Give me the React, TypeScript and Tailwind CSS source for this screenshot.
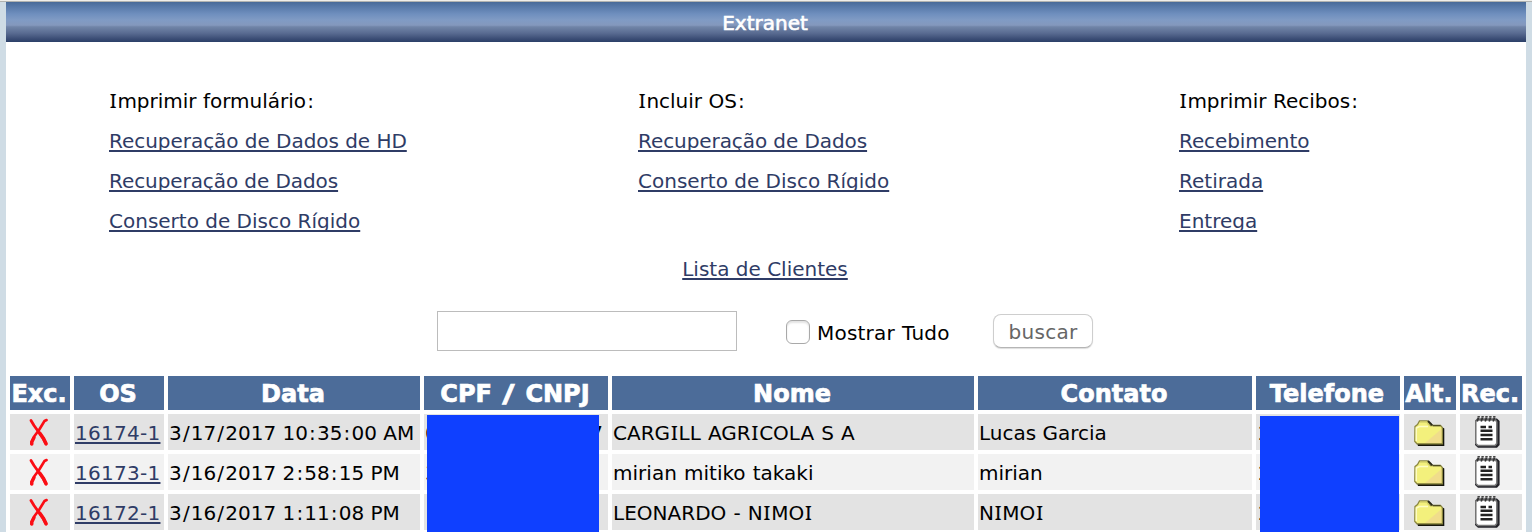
import React from "react";

const rows = [
  { os: "16174-1", date: "3/17/2017 10:35:00 AM", doc: ["0", "7"], name: "CARGILL AGRICOLA S A", contact: "Lucas Garcia", phone: "2" },
  { os: "16173-1", date: "3/16/2017 2:58:15 PM", doc: ["3", ""], name: "mirian mitiko takaki", contact: "mirian", phone: "2" },
  { os: "16172-1", date: "3/16/2017 1:11:08 PM", doc: ["", ""], name: "LEONARDO - NIMOI", contact: "NIMOI", phone: "2" },
];

const headers = ["Exc.", "OS", "Data", "CPF / CNPJ", "Nome", "Contato", "Telefone", "Alt.", "Rec."];

function Txt({ children }: { children: string }) {
  return (
    <>
      {children.split(/([I/:])/).map((part, i) => {
        if (part === "I")
          return (
            <span key={i} className="px-[0.8px] font-['Noto_Sans',sans-serif] leading-none [-webkit-text-stroke:0.2px_black]">
              I
            </span>
          );
        if (part === "/" || part === ":")
          return (
            <span key={i} className="px-[1.15px]">
              {part}
            </span>
          );
        return part;
      })}
    </>
  );
}

function Link({ children, className = "" }: { children: React.ReactNode; className?: string }) {
  return (
    <a
      href="#"
      className={`text-[#2f3c66] underline decoration-2 underline-offset-[2px] [text-decoration-skip-ink:none] ${className}`}
    >
      {children}
    </a>
  );
}

function DeleteIcon() {
  return (
    <svg width="20" height="30" viewBox="0 0 20 30" fill="none" stroke="#fb0d14" strokeLinecap="round" strokeLinejoin="round" className="mx-auto block">
      <path d="M2 3.5L5 8.5L10 15.5L14 21L17 26.5" strokeWidth="2.8" />
      <path d="M11 16.5L14.5 21.5L17 26.8" strokeWidth="3.6" />
      <path d="M17.6 3L15.5 4L10 13L5.5 19L2.5 25V27" strokeWidth="2.6" />
      <path d="M5 20.5L2.8 25V27" strokeWidth="3.4" />
    </svg>
  );
}

function FolderIcon() {
  return (
    <svg width="32" height="28" viewBox="0 0 32 28" className="mx-auto block">
      <path d="M4 25H29V9L31.3 10.5V28H5z" fill="#15150c" />
      <path d="M2 8.5L4.5 6.5L6.5 3H14.5L17.5 7.5H27.5L29.3 9.5V25.8H4L1.8 23.5z" fill="#f3f07c" stroke="#8b8740" strokeWidth="1.3" />
      <path d="M3.3 23V10L6.5 8.5H15" fill="none" stroke="#fdfcc4" strokeWidth="1.5" />
      <path d="M12 25L28.5 11V25z" fill="#efd096" opacity=".6" />
      <path d="M7 4H14L16 7" fill="none" stroke="#d3d06c" strokeWidth="1.5" />
      <path d="M15 3L18.5 6.5L19.5 7" fill="none" stroke="#292918" strokeWidth="1.8" />
      <path d="M20 7.6H27.5" fill="none" stroke="#4e4c24" strokeWidth="1.3" />
    </svg>
  );
}

function NotepadIcon() {
  return (
    <svg width="28" height="34" viewBox="0 0 28 34" className="mx-auto block">
      <path d="M4 3.5H24L26.6 6V30L24 32.7H5L2 30V6z" fill="#222228" />
      <path d="M3.6 5H22.6L23.8 7V28.5L22 30.6H5L2.8 28.5V6.5z" fill="#fff" stroke="#777" strokeWidth="1.5" />
      <path d="M4.2 6.5L5.5 2.5M8.2 6.5L9.5 2.5M12.2 6.5L13.5 2.5M16.2 6.5L17.5 2.5M20.2 6.5L21.5 2.5" stroke="#333" strokeWidth="1.7" />
      <path d="M4.5 1.8H24" stroke="#444" strokeWidth="1.5" strokeDasharray="2.4 1.5" />
      <path d="M7.5 12H13M15.5 12H19M7.5 15.8H19.5M7.5 20H19.5M7.5 24.3H19.5" stroke="#222" strokeWidth="2.4" />
    </svg>
  );
}

export default function App() {
  return (
    <div className="h-[532px] w-[1532px] overflow-hidden bg-[#cfdce5] font-['DejaVu_Sans',Verdana,sans-serif] text-[20px] leading-[40px] text-black">
      <div className="h-px bg-[#efeeea]" />
      <div className="h-px bg-[#b1b3b1]" />
      <div className="mx-[6px] h-[530px] bg-white">
        <header className="h-10 bg-[linear-gradient(#486a98_0%,#5577a7_10%,#6f8fbe_30%,#809bc4_45%,#8498bd_58%,#7185a8_62%,#596b91_78%,#3b4d75_92%,#2b4068_100%)] pr-[2px] pt-px text-center text-white [-webkit-text-stroke:0.6px_white]">
          Extranet
        </header>

        <nav className="grid h-[200px] grid-cols-[529px_541px_1fr] pl-[103px] pt-[39px]">
          <div className="flex flex-col items-start">
            <span><Txt>Imprimir formulário:</Txt></span>
            <Link className="tracking-[-0.04px]">Recuperação de Dados de HD</Link>
            <Link className="tracking-[-0.08px]">Recuperação de Dados</Link>
            <Link>Conserto de Disco Rígido</Link>
          </div>
          <div className="flex flex-col items-start">
            <span><Txt>Incluir OS:</Txt></span>
            <Link className="tracking-[-0.08px]">Recuperação de Dados</Link>
            <Link>Conserto de Disco Rígido</Link>
          </div>
          <div className="flex flex-col items-start">
            <span><Txt>Imprimir Recibos:</Txt></span>
            <Link className="tracking-[-0.1px]">Recebimento</Link>
            <Link>Retirada</Link>
            <Link>Entrega</Link>
          </div>
        </nav>

        <div className="mt-[7px] pr-[2px] text-center">
          <Link>Lista de Clientes</Link>
        </div>

        <form className="mt-[22px] flex h-10 items-center pl-[431px]" onSubmit={(e) => e.preventDefault()}>
          <input type="text" aria-label="Busca" className="h-10 w-[300px] border border-[#bcbcbc] bg-white px-2" />
          <label className="ml-[49px] flex items-center">
            <input
              type="checkbox"
              className="mt-[2px] h-6 w-6 appearance-none rounded-[6px] border border-[#a9a9a9] bg-white shadow-[inset_0_2px_2px_#e3e3e3]"
            />
            <span className="ml-[7px] w-[176px] pt-[3px] tracking-[0.2px] [word-spacing:0.7px]">Mostrar Tudo</span>
          </label>
          <button className="h-[34px] w-[100px] rounded-[8px] border border-[#cecece] border-b-[#b5b5b5] bg-white pt-px leading-[30px] tracking-[0.3px] text-[#666] shadow-[0_1px_1px_#ddd]">
            buscar
          </button>
        </form>

        <div className="relative mt-[21px]">
          <table className="w-[1520px] table-fixed border-separate border-spacing-[4px]">
            <colgroup>
              <col className="w-[60px]" />
              <col className="w-[90px]" />
              <col className="w-[252px]" />
              <col className="w-[184px]" />
              <col className="w-[362px]" />
              <col className="w-[274px]" />
              <col className="w-[144px]" />
              <col className="w-[52px]" />
              <col className="w-[62px]" />
            </colgroup>
            <thead>
              <tr className="h-[34px] bg-[#4c6c99] text-[24px] leading-[32px] text-white [-webkit-text-stroke:0.7px_white]">
                {headers.map((h) => (
                  <th key={h} className="whitespace-nowrap p-0 pr-[2px] pt-[2px] text-center font-bold">
                    {h.split(/(\/)/).map((part, i) =>
                      part === "/" ? (
                        <span key={i} className="inline-block origin-center scale-x-140 px-[4px]">/</span>
                      ) : (
                        part
                      ),
                    )}
                  </th>
                ))}
              </tr>
            </thead>
            <tbody>
              {rows.map((r) => (
                <tr key={r.os} className="h-[36px] whitespace-nowrap leading-[34px] odd:bg-[#e3e3e3] even:bg-[#f2f2f2]">
                  <td className="p-0 pr-[3px]"><DeleteIcon /></td>
                  <td className="p-0 pl-px pt-[2px] tracking-[0.27px]"><Link>{r.os}</Link></td>
                  <td className="p-0 pl-px pt-[2px]"><Txt>{r.date}</Txt></td>
                  <td className="p-0 pl-px pr-[5px] pt-[2px]">
                    <div className="flex h-[34px] justify-between">
                      <span>{r.doc[0]}</span>
                      <span>{r.doc[1]}</span>
                    </div>
                  </td>
                  <td className="p-0 pl-px pt-[2px] tracking-[0.02px] [word-spacing:0.7px]"><Txt>{r.name}</Txt></td>
                  <td className="p-0 pl-px pt-[2px]"><Txt>{r.contact}</Txt></td>
                  <td className="p-0 pl-[2px] pt-[2px]">{r.phone}</td>
                  <td className="p-0 pr-[2px]"><FolderIcon /></td>
                  <td className="p-0 pr-[8px]"><NotepadIcon /></td>
                </tr>
              ))}
            </tbody>
          </table>
          <div className="absolute left-[421px] top-[43px] h-[117px] w-[172px] bg-[#0f40ff]" />
          <div className="absolute left-[1254px] top-[44px] h-[116px] w-[139px] bg-[#0f40ff]" />
        </div>
      </div>
    </div>
  );
}
